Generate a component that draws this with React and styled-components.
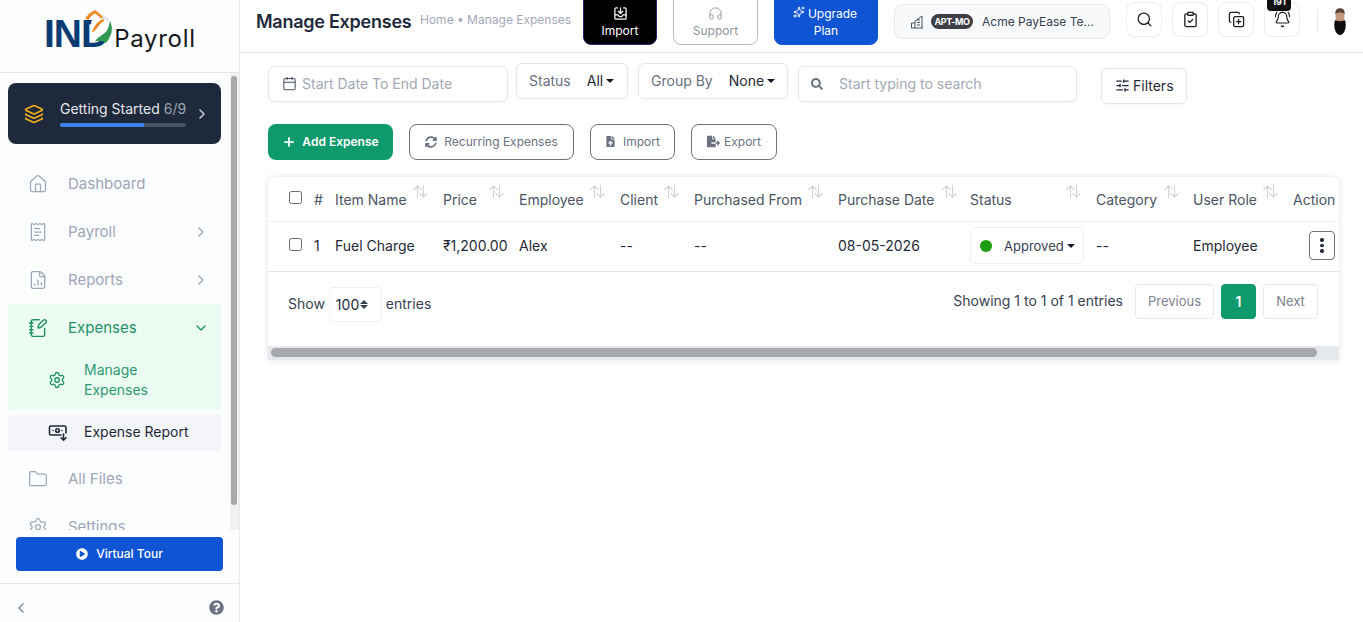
import React from 'react';
import styled, { createGlobalStyle } from 'styled-components';
import {
  House, ReceiptText, FileChartColumn, NotebookPen, Settings, Folder, Layers,
  ChevronRight, ChevronDown, ChevronLeft, Calendar, SlidersHorizontal, Plus,
  Headphones, Sparkles, ClipboardCheck, CopyPlus, BellRing, Search,
} from 'lucide-react';
import { FaSearch, FaSyncAlt, FaFileUpload, FaFileExport, FaQuestionCircle, FaPlayCircle } from 'react-icons/fa';

const GlobalStyle = createGlobalStyle`
  html, body { margin: 0; padding: 0; height: 100%; background: #fff; }
  body { font-family: Inter, "Noto Sans", "Liberation Sans", sans-serif; overflow: hidden; }
  * { box-sizing: border-box; }
`;

const Page = styled.div`
  display: flex;
  width: 100%;
  height: 100vh;
`;

/* sidebar */
const Sidebar = styled.aside`
  width: 240px;
  flex: none;
  display: flex;
  flex-direction: column;
  background: #fcfdff;
  border-right: 1px solid #e8eaee;
`;
const LogoBar = styled.div`
  height: 73px;
  flex: none;
  border-bottom: 1px solid #e5e7eb;
  display: flex;
  align-items: flex-start;
  padding: 12px 0 0 44px;
`;
const Logo = styled.div`
  position: relative;
  display: flex;
  align-items: baseline;
  gap: 6px;
`;
const LogoInd = styled.span`
  font-family: "Liberation Sans", sans-serif;
  font-weight: 700;
  font-size: 39px;
  line-height: 44px;
  letter-spacing: -1px;
  color: #0b3d74;
`;
const LogoPay = styled.span`
  font-size: 24px;
  letter-spacing: .7px;
  color: #16181d;
`;
const LogoMark = styled.svg`
  position: absolute;
  left: 36px;
  top: -3px;
`;
const MenuScroll = styled.div`
  position: relative;
  flex: 1;
  min-height: 0;
  overflow: hidden;
  padding: 10px 19px 0 8px;
`;
const ScrollTrack = styled.div`
  position: absolute;
  right: 0;
  top: 0;
  bottom: 0;
  width: 9px;
  background: #f1f1f1;
`;
const ScrollThumb = styled.div`
  margin: 3px 0 0 1px;
  width: 6px;
  height: 429px;
  border-radius: 3px;
  background: #a9a9a9;
`;
const StartCard = styled.div`
  height: 61px;
  width: 213px;
  border-radius: 8px;
  background: #1e293b;
  display: flex;
  align-items: center;
  padding-left: 16px;
  margin-bottom: 16px;
  color: #f5ae1b;
`;
const StartBody = styled.div`
  margin-left: 16px;
  width: 126px;
`;
const StartTitle = styled.div`
  font-size: 14px;
  line-height: 18px;
  color: #e5e7eb;
  white-space: nowrap;
  span { color: #9ca3af; }
`;
const Progress = styled.div`
  margin-top: 5px;
  height: 4px;
  border-radius: 2px;
  background: #475569;
  overflow: hidden;
`;
const ProgressFill = styled.div`
  height: 100%;
  background: #3b82f6;
`;
const StartArrow = styled.div`
  margin-left: 8px;
  color: #d5d9e0;
  display: flex;
`;
const MenuItem = styled.div`
  height: 48px;
  width: 213px;
  display: flex;
  align-items: center;
  padding: 0 12px 0 20px;
  font-size: 15px;
  color: ${p => (p.$active ? '#1f8f68' : '#9ea6b8')};
  svg { flex: none; }
`;
const MenuLabel = styled.span`
  margin-left: 20px;
  flex: 1;
  padding-bottom: 2px;
`;
const ExpenseGroup = styled.div`
  width: 213px;
  height: 106px;
  background: #ebfdf3;
`;
const SubItem = styled.div`
  display: flex;
  align-items: center;
  width: 213px;
  padding-left: 40px;
  font-size: 14px;
  line-height: 20px;
  color: ${p => (p.$active ? '#2f9a72' : '#1f2937')};
  background: ${p => (p.$active ? 'transparent' : '#f3f5f9')};
  height: ${p => (p.$active ? '48px' : '36px')};
  border-radius: ${p => (p.$active ? '0' : '4px')};
  margin-top: ${p => (p.$active ? '4px' : '5px')};
  margin-bottom: ${p => (p.$active ? '0' : '4px')};
`;
const SubLabel = styled.span`
  margin-left: ${p => p.$ml}px;
  padding-bottom: ${p => (p.$ml === 16 ? 2 : 0)}px;
`;
const TourWrap = styled.div`
  flex: none;
  height: 54px;
  padding: 7px 16px 0;
  border-bottom: 1px solid #e5e7eb;
`;
const TourButton = styled.div`
  width: 207px;
  height: 34px;
  padding-bottom: 1px;
  border-radius: 4px;
  background: #0f54d2;
  color: #fff;
  font-size: 12px;
  font-weight: 500;
  display: flex;
  align-items: center;
  justify-content: center;
  gap: 8px;
`;
const SideFooter = styled.div`
  flex: none;
  height: 38px;
  display: flex;
  align-items: center;
  justify-content: space-between;
  padding: 9px 15px 0 13px;
  color: #6b7280;
`;

/* main */
const Main = styled.main`
  flex: 1;
  min-width: 0;
  display: flex;
  flex-direction: column;
`;
const Header = styled.header`
  height: 53px;
  flex: none;
  display: flex;
  align-items: flex-start;
  border-bottom: 1px solid #e8eaee;
  overflow: hidden;
  padding-left: 16px;
`;
const PageTitle = styled.h1`
  margin: 11px 0 0;
  width: 164px;
  font-size: 18px;
  line-height: 22px;
  font-weight: 600;
  color: #1e293b;
  white-space: nowrap;
  letter-spacing: -.25px;
`;
const Crumbs = styled.div`
  margin: 12px 0 0;
  width: 163px;
  font-size: 12px;
  line-height: 16px;
  color: #a3a8b8;
  white-space: nowrap;
`;
const TopButton = styled.div`
  width: ${p => p.$w}px;
  margin-left: ${p => p.$ml}px;
  height: 61px;
  margin-top: -16px;
  padding-top: ${p => p.$pt || 21}px;
  border-radius: 8px;
  background: ${p => p.$bg};
  border: 1px solid ${p => p.$line};
  color: ${p => p.$fg};
  font-size: 12px;
  line-height: 17px;
  text-align: center;
  font-weight: ${p => p.$weight || 400};
`;
const TopIcon = styled.span`
  display: flex;
  justify-content: center;
  height: 15px;
  margin-bottom: 1px;
`;
const Sparkle = styled.span`
  display: inline-flex;
  vertical-align: 0;
  margin-right: 3px;
  margin-left: -2px;
`;
const Company = styled.div`
  margin: 4px 0 0 16px;
  width: 216px;
  height: 35px;
  border-radius: 8px;
  border: 1px solid #e6e8ec;
  background: #f8f9fb;
  display: flex;
  align-items: center;
  padding-left: 15px;
  font-size: 12px;
  color: #374151;
  white-space: nowrap;
`;
const Tag = styled.span`
  margin: 0 9px 0 7px;
  height: 15px;
  width: 42px;
  border-radius: 8px;
  background: #3f3f46;
  color: #fff;
  font-size: 9px;
  line-height: 15px;
  font-weight: 700;
  letter-spacing: -.4px;
  text-align: center;
`;
const IconBox = styled.div`
  position: relative;
  margin: 2px 0 0 ${p => p.$ml}px;
  width: 36px;
  height: 35px;
  border: 1px solid #ebedf0;
  border-radius: 8px;
  background: #fff;
  display: flex;
  align-items: center;
  justify-content: center;
  color: #1c1c1c;
`;
const Badge = styled.span`
  position: absolute;
  top: -9px;
  left: 2px;
  width: 24px;
  height: 17px;
  padding-top: 3px;
  border-radius: 4px;
  background: #111;
  color: #fff;
  font-size: 9px;
  line-height: 9px;
  font-weight: 700;
  text-align: center;
`;
const Divider = styled.div`
  width: 1px;
  height: 24px;
  margin: 9px 0 0 17px;
  background: #e5e7eb;
`;
const Avatar = styled.svg`
  margin: 8px 0 0 16px;
`;
const Content = styled.div`
  padding: 10px 24px 0 28px;
`;
const FilterRow = styled.div`
  display: flex;
  align-items: flex-start;
`;
const FilterBox = styled.div`
  width: ${p => p.$w}px;
  height: 36px;
  margin-left: ${p => p.$ml || 0}px;
  margin-top: ${p => p.$mt || 0}px;
  border: 1px solid #e5e7eb;
  border-radius: 6px;
  background: #fff;
  box-shadow: 0 1px 2px rgba(0, 0, 0, .03);
  display: flex;
  align-items: center;
  padding-left: ${p => p.$pl || 12}px;
  padding-bottom: 1px;
  font-size: 14px;
  color: #a3a8b4;
  white-space: nowrap;
`;
const BoxLabel = styled.span`
  color: #6b7280;
  margin-right: 16px;
  padding-bottom: 1px;
`;
const BoxValue = styled.span`
  color: #1f2937;
`;
const Caret = styled.span`
  display: inline-block;
  margin-left: 3px;
  border-top: 4px solid #111827;
  border-left: 4px solid transparent;
  border-right: 4px solid transparent;
`;
const FiltersButton = styled(FilterBox)`
  color: #1f2937;
  gap: 3px;
`;
const ActionRow = styled.div`
  display: flex;
  gap: 16px;
  margin-top: 20px;
`;
const AddButton = styled.div`
  width: 125px;
  height: 36px;
  padding-bottom: 1px;
  border-radius: 8px;
  background: #0e9a6c;
  color: #fff;
  font-size: 12px;
  font-weight: 600;
  display: flex;
  align-items: center;
  justify-content: center;
  gap: 6px;
`;
const OutlineButton = styled.div`
  width: ${p => p.$w}px;
  height: 36px;
  padding-bottom: 1px;
  border: 1px solid #6b7280;
  border-radius: 8px;
  background: #fff;
  color: #6b7280;
  font-size: 12px;
  display: flex;
  align-items: center;
  justify-content: center;
  gap: ${p => p.$gap || 7}px;
`;
const Card = styled.section`
  margin-top: 17px;
  width: 1071px;
  background: #fff;
  border-radius: 6px 6px 0 0;
  box-shadow: 0 0 6px rgba(20, 30, 50, .12);
  overflow: hidden;
`;
const cols = '25px 21px 108px 76px 101px 74px 144px 132px 126px 97px 100px 46px';
const TableHead = styled.div`
  display: grid;
  grid-template-columns: ${cols};
  height: 45px;
  padding-left: 21px;
  align-items: center;
  border-bottom: 1px solid #edeff2;
  font-size: 14px;
  color: #4b5563;
  white-space: nowrap;
`;
const TableRow = styled.div`
  display: grid;
  grid-template-columns: ${cols};
  height: 50px;
  padding: 0 0 2px 21px;
  align-items: center;
  border-bottom: 1px solid #e5e7eb;
  font-size: 14px;
  color: #1f2937;
  white-space: nowrap;
`;
const HeadCell = styled.div`
  position: relative;
  height: 100%;
  display: flex;
  align-items: center;
`;
const SortIcon = styled.svg`
  position: absolute;
  top: 8px;
  right: ${p => p.$r || 15}px;
`;
const Check = styled.span`
  display: block;
  width: 13px;
  height: 13px;
  border: 1px solid #6b6b6b;
  border-radius: 2.5px;
  margin-top: ${p => p.$mt || 0}px;
  background: #fff;
`;
const StatusPill = styled.div`
  width: 114px;
  height: 37px;
  border: 1px solid #edeff2;
  border-radius: 5px;
  display: flex;
  align-items: center;
  padding-left: 9px;
  font-size: 13px;
  color: #374151;
`;
const Dot = styled.span`
  width: 12px;
  height: 12px;
  border-radius: 50%;
  background: #1f9d0f;
  margin-right: 12px;
`;
const DotsButton = styled.div`
  width: 26px;
  height: 29px;
  margin-left: 16px;
  border: 1px solid #6b7280;
  border-radius: 4px;
  display: flex;
  flex-direction: column;
  align-items: center;
  justify-content: center;
  gap: 2px;
  span { width: 3.5px; height: 3.5px; border-radius: 50%; background: #1f2937; }
`;
const TableFoot = styled.div`
  height: 74px;
  display: flex;
  align-items: flex-start;
  justify-content: space-between;
  padding: 12px 21px 0 20px;
  font-size: 14px;
  color: #374151;
`;
const ShowBlock = styled.div`
  display: flex;
  align-items: center;
  gap: 4px;
  margin-top: 3px;
`;
const ShowText = styled.span`
  padding-bottom: 3px;
`;
const PageSelect = styled.div`
  width: 53px;
  height: 35px;
  border: 1px solid #edeff2;
  border-radius: 5px;
  display: flex;
  align-items: center;
  padding-left: 6px;
  color: #1f2937;
  gap: 1px;
`;
const UpDown = styled.span`
  display: flex;
  flex-direction: column;
  gap: 1.5px;
  &::before, &::after { content: ''; border-left: 4px solid transparent; border-right: 4px solid transparent; }
  &::before { border-bottom: 4px solid #374151; }
  &::after { border-top: 4px solid #374151; }
`;
const Pager = styled.div`
  display: flex;
  align-items: center;
  gap: 7px;
`;
const PagerInfo = styled.span`
  margin-right: 5px;
  padding-bottom: 2px;
`;
const PageButton = styled.div`
  height: 35px;
  width: ${p => p.$w}px;
  padding-bottom: 1px;
  border: 1px solid ${p => (p.$on ? '#0e9a6c' : '#e5e7eb')};
  border-radius: 4px;
  background: ${p => (p.$on ? '#0e9a6c' : '#fff')};
  color: ${p => (p.$on ? '#fff' : '#7b8290')};
  font-size: ${p => (p.$on ? 14 : 13)}px;
  font-weight: ${p => (p.$on ? 600 : 400)};
  display: flex;
  align-items: center;
  justify-content: center;
`;
const CardScroll = styled.div`
  height: 14px;
  background: #e5e9ee;
  padding: 2px 22px 3px 3px;
`;
const CardThumb = styled.div`
  height: 100%;
  border-radius: 5px;
  background: #a6a8ab;
`;

const columns = [
  { label: 'Item Name' }, { label: 'Price' }, { label: 'Employee' }, { label: 'Client' },
  { label: 'Purchased From' }, { label: 'Purchase Date', r: 13 }, { label: 'Status' },
  { label: 'Category', r: 14 }, { label: 'User Role' },
];

const ImportGlyph = () => (
  <svg width="15" height="15" viewBox="0 0 24 24" fill="none" stroke="currentColor" strokeWidth="2" strokeLinecap="round" strokeLinejoin="round">
    <path d="M7 3H5a2 2 0 0 0-2 2v14a2 2 0 0 0 2 2h14a2 2 0 0 0 2-2V5a2 2 0 0 0-2-2h-2" />
    <path d="M3 14h5l2 3h4l2-3h5" />
    <path d="M12 3v9M8.500 8.500 12 12l3.500-3.500" />
  </svg>
);

const ReportGlyph = () => (
  <svg width="20" height="18" viewBox="0 0 20 18" fill="none" stroke="#1f2937" strokeWidth="1.6" strokeLinecap="round" strokeLinejoin="round">
    <path d="M13 11H3a1.500 1.500 0 0 1-1.500-1.500v-6A1.500 1.500 0 0 1 3 2h13.500A1.500 1.500 0 0 1 18 3.500V9" />
    <circle cx="9.500" cy="6.500" r="1.800" />
    <path d="M5 6.500h.01M14 6.500h.01M15.500 10v6M13 13.800l2.500 2.500 2.500-2.500" />
  </svg>
);

const BuildingGlyph = () => (
  <svg width="14" height="14" viewBox="0 0 14 14" fill="none" stroke="#4b5563" strokeWidth="1">
    <path d="M1 13h12M5 13V6L12 1v12M5 8H1.500v5M7 5h3M7 7.500h3M7 10h3" />
  </svg>
);

const SortGlyph = ({ r }) => (
  <SortIcon $r={r} width="15" height="13" viewBox="0 0 15 13" fill="none" stroke="#cfd2d6" strokeWidth="1.1" strokeLinecap="round" strokeLinejoin="round">
    <path d="M4.500 12.500V1M.8 4.700 4.500 1l3.700 3.700M10.500 .5V12M6.800 8.300l3.700 3.700 3.700-3.700" />
  </SortIcon>
);

const AvatarDrawing = () => (
  <Avatar width="12" height="27" viewBox="0 0 12 27">
    <path d="M1.500 7C1 2.500 3 0 6 0s5 2.500 4.500 7l-.5 8H2Z" fill="#c4977f" />
    <path d="M1.500 6C1 2 3 .5 6 .5S11 2 10.500 6C9 4 3 4 1.500 6Z" fill="#57463a" />
    <path d="M1 12c1.500 1.500 8.500 1.500 10 0 1 3 1 7 0 10-1 3-3 5-5 5s-4-2-5-5c-1-3-1-7 0-10Z" fill="#0e0e0e" />
  </Avatar>
);

const App = () => (
  <Page>
    <GlobalStyle />
    <Sidebar>
      <LogoBar>
        <Logo>
          <LogoInd>IND</LogoInd>
          <LogoPay>Payroll</LogoPay>
          <LogoMark width="36" height="36" viewBox="0 0 36 36">
            <path d="M11 13 16 5l14 7v9l-8 5-9-1-1-3Z" fill="#fff" />
            <path d="M5 9.500C8 5.500 11 2.500 15 1c3 2 6 4.500 8.500 7.500L21 9.500C19 7.500 17 5.500 15 4.500 12 6 10 8 8.500 11Z" fill="#ee8a2c" />
            <path d="M12 23.500c1-4 3-7.500 6-10.500 2-1.500 3.500-2.500 5.500-3.500l.5 2.500c-3 2-5 4-6.500 6.500-1.500 2.500-3.500 4-5.500 5Z" fill="#ee8a2c" />
            <path d="M23 6c2.500 1.500 5 3.500 6.500 5.500L27 13c-1-2-3-4-5-5Z" fill="#dfe2e6" />
            <path d="M15 32.500c1.500-3 4-5 7.500-6.500 3.500-2 6-6 7.500-14 2.500 5 2.500 11 0 15.500-1 2.500-2.500 5-4.500 6.500-3-2.500-6.500-3-10.500-1.500Z" fill="#2f9a50" />
          </LogoMark>
        </Logo>
      </LogoBar>
      <MenuScroll>
        <ScrollTrack><ScrollThumb /></ScrollTrack>
        <StartCard>
          <Layers size={20} />
          <StartBody>
            <StartTitle>Getting Started <span>6/9</span></StartTitle>
            <Progress><ProgressFill style={{ width: `${(6 / 9) * 100}%` }} /></Progress>
          </StartBody>
          <StartArrow><ChevronRight size={16} /></StartArrow>
        </StartCard>
        <MenuItem><House size={20} strokeWidth={1.5} /><MenuLabel>Dashboard</MenuLabel></MenuItem>
        <MenuItem><ReceiptText size={20} strokeWidth={1.5} /><MenuLabel>Payroll</MenuLabel><ChevronRight size={16} /></MenuItem>
        <MenuItem><FileChartColumn size={20} strokeWidth={1.5} /><MenuLabel>Reports</MenuLabel><ChevronRight size={16} /></MenuItem>
        <ExpenseGroup>
          <MenuItem $active><NotebookPen size={20} strokeWidth={1.7} /><MenuLabel>Expenses</MenuLabel><ChevronDown size={16} /></MenuItem>
          <SubItem $active><Settings size={18} strokeWidth={1.8} color="#1f8f68" /><SubLabel $ml={18}>Manage<br />Expenses</SubLabel></SubItem>
        </ExpenseGroup>
        <SubItem><ReportGlyph /><SubLabel $ml={16}>Expense Report</SubLabel></SubItem>
        <MenuItem><Folder size={20} strokeWidth={1.5} /><MenuLabel>All Files</MenuLabel></MenuItem>
        <MenuItem><Settings size={20} strokeWidth={1.5} /><MenuLabel>Settings</MenuLabel></MenuItem>
      </MenuScroll>
      <TourWrap>
        <TourButton><FaPlayCircle size={12} />Virtual Tour</TourButton>
      </TourWrap>
      <SideFooter>
        <ChevronLeft size={16} strokeWidth={2.5} color="#8b919c" />
        <FaQuestionCircle size={15} />
      </SideFooter>
    </Sidebar>
    <Main>
      <Header>
        <PageTitle>Manage Expenses</PageTitle>
        <Crumbs>Home • Manage Expenses</Crumbs>
        <TopButton $w={74} $ml={0} $bg="#000" $line="#24246a" $fg="#fff">
          <TopIcon><ImportGlyph /></TopIcon>Import
        </TopButton>
        <TopButton $w={85} $ml={16} $bg="#fff" $line="#b9bcc2" $fg="#8f949c">
          <TopIcon><Headphones size={15} strokeWidth={1.5} /></TopIcon>Support
        </TopButton>
        <TopButton $w={104} $ml={16} $pt={20} $bg="#0f54d2" $line="#0f54d2" $fg="#fff">
          <Sparkle><Sparkles size={12} /></Sparkle>Upgrade<br />Plan
        </TopButton>
        <Company>
          <BuildingGlyph /><Tag>APT-MO</Tag>Acme PayEase Te...
        </Company>
        <IconBox $ml={16}><Search size={17} strokeWidth={1.8} /></IconBox>
        <IconBox $ml={10}><ClipboardCheck size={17} strokeWidth={1.8} /></IconBox>
        <IconBox $ml={10}><CopyPlus size={17} strokeWidth={1.8} /></IconBox>
        <IconBox $ml={10}><Badge>191</Badge><BellRing size={17} strokeWidth={1.6} /></IconBox>
        <Divider />
        <AvatarDrawing />
      </Header>
      <Content>
        <FilterRow>
          <FilterBox $w={240} $mt={3} $pl={13}>
            <Calendar size={15} strokeWidth={1.7} color="#4b5563" style={{ marginRight: 5 }} />Start Date To End Date
          </FilterBox>
          <FilterBox $w={112} $ml={8}>
            <BoxLabel>Status</BoxLabel><BoxValue>All</BoxValue><Caret />
          </FilterBox>
          <FilterBox $w={150} $ml={10}>
            <BoxLabel>Group By</BoxLabel><BoxValue>None</BoxValue><Caret />
          </FilterBox>
          <FilterBox $w={279} $ml={10} $mt={3}>
            <FaSearch size={12} color="#6b7280" style={{ marginRight: 16 }} />Start typing to search
          </FilterBox>
          <FiltersButton $w={86} $ml={24} $mt={5} $pl={13}>
            <SlidersHorizontal size={15} color="#1f2937" />Filters
          </FiltersButton>
        </FilterRow>
        <ActionRow>
          <AddButton><Plus size={14} strokeWidth={3} />Add Expense</AddButton>
          <OutlineButton $w={165}><FaSyncAlt size={12} />Recurring Expenses</OutlineButton>
          <OutlineButton $w={85}><FaFileUpload size={11} />Import</OutlineButton>
          <OutlineButton $w={86} $gap={4}><FaFileExport size={13} />Export</OutlineButton>
        </ActionRow>
        <Card>
          <TableHead>
            <HeadCell><Check $mt={-4} /></HeadCell>
            <HeadCell>#</HeadCell>
            {columns.map(c => (
              <HeadCell key={c.label}>
                {c.label}
                <SortGlyph r={c.r} />
              </HeadCell>
            ))}
            <HeadCell>Action</HeadCell>
          </TableHead>
          <TableRow>
            <Check $mt={-3} />
            <span>1</span>
            <span>Fuel Charge</span>
            <span>₹1,200.00</span>
            <span>Alex</span>
            <span>--</span>
            <span>--</span>
            <span>08-05-2026</span>
            <StatusPill><Dot />Approved<Caret /></StatusPill>
            <span>--</span>
            <span>Employee</span>
            <DotsButton><span /><span /><span /></DotsButton>
          </TableRow>
          <TableFoot>
            <ShowBlock>
              <ShowText>Show</ShowText>
              <PageSelect>100<UpDown /></PageSelect>
              <ShowText>entries</ShowText>
            </ShowBlock>
            <Pager>
              <PagerInfo>Showing 1 to 1 of 1 entries</PagerInfo>
              <PageButton $w={79}>Previous</PageButton>
              <PageButton $w={35} $on>1</PageButton>
              <PageButton $w={55}>Next</PageButton>
            </Pager>
          </TableFoot>
          <CardScroll><CardThumb /></CardScroll>
        </Card>
      </Content>
    </Main>
  </Page>
);

export default App;
